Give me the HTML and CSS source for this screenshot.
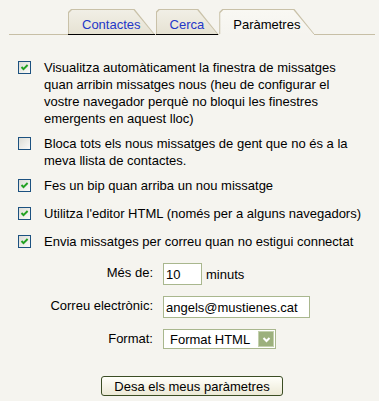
FILE: index.html
```html
<!DOCTYPE html>
<html lang="ca">
<head>
    <meta charset="UTF-8">
    <title>Paràmetres</title>
    <link rel="stylesheet" href="styles.css">
</head>
<body>

<div id="page">
    <div class="tabs">
        <a class="tab">Contactes</a>
        <a class="tab">Cerca</a>
        <a class="tab active">Paràmetres</a>
    </div>

    <div class="options">
        <div class="option">
            <span class="box checked"><svg width="11" height="11" viewBox="0 0 11 11"><path d="M2.5 5 L4.5 7.2 L8.6 3" fill="none" stroke="#21a121" stroke-width="1.9"/></svg></span>
            <span>Visualitza automàticament la finestra de missatges quan arribin missatges nous (heu de configurar el vostre navegador perquè no bloqui les finestres emergents en aquest lloc)</span>
        </div>
        <div class="option">
            <span class="box"></span>
            <span>Bloca tots els nous missatges de gent que no és a la meva llista de contactes.</span>
        </div>
        <div class="option">
            <span class="box checked"><svg width="11" height="11" viewBox="0 0 11 11"><path d="M2.5 5 L4.5 7.2 L8.6 3" fill="none" stroke="#21a121" stroke-width="1.9"/></svg></span>
            <span>Fes un bip quan arriba un nou missatge</span>
        </div>
        <div class="option">
            <span class="box checked"><svg width="11" height="11" viewBox="0 0 11 11"><path d="M2.5 5 L4.5 7.2 L8.6 3" fill="none" stroke="#21a121" stroke-width="1.9"/></svg></span>
            <span class="nowrap">Utilitza l'editor HTML (només per a alguns navegadors)</span>
        </div>
        <div class="option">
            <span class="box checked"><svg width="11" height="11" viewBox="0 0 11 11"><path d="M2.5 5 L4.5 7.2 L8.6 3" fill="none" stroke="#21a121" stroke-width="1.9"/></svg></span>
            <span>Envia missatges per correu quan no estigui connectat</span>
        </div>
    </div>

    <div class="fields">
        <label>Més de:</label>
        <div class="field"><span class="input short">10</span> minuts</div>

        <label>Correu electrònic:</label>
        <div class="field"><span class="input email">angels@mustienes.cat</span></div>

        <label>Format:</label>
        <div class="field">
            <span class="select">Format HTML
                <span class="arrow"><svg width="13" height="13" viewBox="0 0 13 13"><path d="M3.5 5 L6.5 8 L9.5 5" fill="none" stroke="#fff" stroke-width="2"/></svg></span>
            </span>
        </div>
    </div>

    <div class="actions">
        <button>Desa els meus paràmetres</button>
    </div>
</div>

</body>
</html>
```

FILE: styles.css
```css
body {
    margin: 0;
    font-family: 'Liberation Sans', Arial, sans-serif;
    font-size: 13px;
    line-height: 17px;
    color: #000;
    background: #f5f4ef;
}

#page {
    margin: 0 4px 0 9px;
    padding-top: 9px;
}

.tabs {
    display: flex;
    gap: 1px;
    padding-left: 59px;
    border-bottom: 1px solid #c7bfa6;
}

.tab {
    position: relative;
    display: block;
    height: 25px;
    line-height: 31px;
    padding: 0 14px;
    margin-bottom: -1px;
    border-bottom: 1px solid #000;
    color: #2437c8;
    cursor: pointer;
}

.tab::before,
.tab::after {
    content: "";
    position: absolute;
    z-index: -1;
    clip-path: polygon(0 3px, 3px 0, calc(100% - 20px) 0, 100% 100%, 0 100%);
}

.tab::before {
    inset: 0;
    background: #c9c1a8;
}

.tab::after {
    top: 1px;
    left: 1px;
    right: 1px;
    bottom: 0;
    background: linear-gradient(to bottom, #f1efe6, #e6e2d3);
}

.tab.active {
    color: #000;
    border-bottom-color: #f5f4ef;
}

.tab.active::after {
    background: linear-gradient(to bottom, #f9f8f3, #f5f4ef);
}

.options {
    padding: 24px 0 0 9px;
    display: flex;
    flex-direction: column;
    gap: 8px;
}

.option {
    display: flex;
    gap: 13px;
    min-height: 20px;
    padding-right: 17px;
}

.nowrap {
    white-space: nowrap;
}

.box {
    flex: none;
    width: 11px;
    height: 11px;
    margin-top: 2px;
    border: 1px solid #1c5180;
    background: linear-gradient(135deg, #dcdcd5, #fbfbf9);
}

.box svg {
    display: block;
}

.fields {
    display: grid;
    grid-template-columns: 144px auto;
    column-gap: 10px;
    row-gap: 11px;
    margin-top: 10px;
    justify-content: start;
}

.fields label {
    text-align: right;
    padding-top: 1px;
}

.field {
    display: flex;
    align-items: center;
    gap: 4px;
}

.input {
    display: block;
    height: 20px;
    line-height: 22px;
    padding: 0 2px;
    background: #fff;
    border: 1px solid #a9b78e;
    font-size: 13px;
}

.input.short {
    width: 33px;
}

.input.email {
    width: 141px;
}

.select {
    position: relative;
    display: block;
    width: 105px;
    height: 18px;
    line-height: 20px;
    padding: 0 0 0 6px;
    background: #fff;
    border: 1px solid #a9b78e;
    font-size: 13px;
}

.arrow {
    position: absolute;
    right: 1px;
    top: 1px;
    width: 14px;
    height: 14px;
    background: #9cb07d;
    border: 1px solid #c3d0ad;
    display: flex;
    align-items: center;
    justify-content: center;
}

.actions {
    text-align: center;
    margin-top: 27px;
}

button {
    font-family: 'Liberation Sans', Arial, sans-serif;
    font-size: 13px;
    width: 182px;
    height: 20px;
    padding: 0;
    color: #000;
    background: linear-gradient(to bottom, #fffffa, #ece9d6);
    border: 1px solid #3b4d24;
    border-radius: 3px;
    cursor: pointer;
}
```
